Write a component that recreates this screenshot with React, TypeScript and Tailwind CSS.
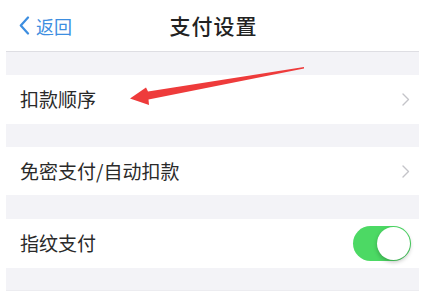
import { useState } from "react";

const font = { fontFamily: '"Noto Sans CJK SC", "Noto Sans", sans-serif' };

function Chevron() {
  return (
    <svg width="8" height="13" viewBox="0 0 8 13" fill="none">
      <path d="M1 1l5.5 5.5L1 12" stroke="#c4c4c9" strokeWidth="1.4" strokeLinecap="round" strokeLinejoin="round" />
    </svg>
  );
}

function Toggle({ on, onClick }: { on: boolean; onClick: () => void }) {
  return (
    <button
      onClick={onClick}
      className={`relative w-[58px] h-[35px] rounded-full transition-colors ${on ? "bg-[#4cd964]" : "bg-[#e5e5ea]"}`}
    >
      <span
        className={`absolute top-[1px] w-[33px] h-[33px] rounded-full bg-white shadow-[0_2px_4px_rgba(0,0,0,0.25)] transition-all ${on ? "left-[24px]" : "left-[1px]"}`}
      />
    </button>
  );
}

export default function App() {
  const [fingerprint, setFingerprint] = useState(true);

  return (
    <div className="relative w-[425px] h-[308px] overflow-hidden bg-white" style={font}>
      <div className="relative h-[51px] flex items-center justify-center">
        <div className="absolute left-[19px] top-[16px] flex items-center gap-[6px] text-[#3d8ee0]">
          <svg width="11" height="19" viewBox="0 0 11 19" fill="none">
            <path d="M9 1.5L1.8 9.5 9 17.5" stroke="#3d8ee0" strokeWidth="2.2" strokeLinecap="round" strokeLinejoin="round" />
          </svg>
          <span className="text-[18px] leading-none">返回</span>
        </div>
        <h1 className="text-[21px] font-medium text-[#222] tracking-[1px] pl-[2px]">支付设置</h1>
      </div>

      <div className="mx-[6px] bg-[#f3f3f7] border-t border-[#dedee3]">
        <div className="h-[23px]" />
        <div className="h-[49px] bg-white flex items-center justify-between pl-[14px] pr-[9px]">
          <span className="text-[19px] text-[#2a2a2a]">扣款顺序</span>
          <Chevron />
        </div>
        <div className="h-[23px]" />
        <div className="h-[48px] bg-white flex items-center justify-between pl-[14px] pr-[9px]">
          <span className="text-[19px] text-[#2a2a2a]">免密支付/自动扣款</span>
          <Chevron />
        </div>
        <div className="h-[24px]" />
        <div className="h-[49px] bg-white flex items-center justify-between pl-[14px] pr-[8px]">
          <span className="text-[19px] text-[#2a2a2a]">指纹支付</span>
          <Toggle on={fingerprint} onClick={() => setFingerprint(!fingerprint)} />
        </div>
        <div className="h-[23px] border-b border-[#ececf0]" />
        <div className="h-[50px] bg-white flex items-center justify-between pl-[14px] pr-[9px]">
          <span className="text-[19px] text-[#2a2a2a] leading-none">智能助手</span>
          <Chevron />
        </div>
      </div>

      <svg className="absolute left-0 top-0 pointer-events-none" width="425" height="308" viewBox="0 0 425 308">
        <path d="M304 67L148 91.5L146 87.5L130 98.5L149 105L148.5 99.5L304 68.5Z" fill="#ee3b3b" />
      </svg>
    </div>
  );
}
